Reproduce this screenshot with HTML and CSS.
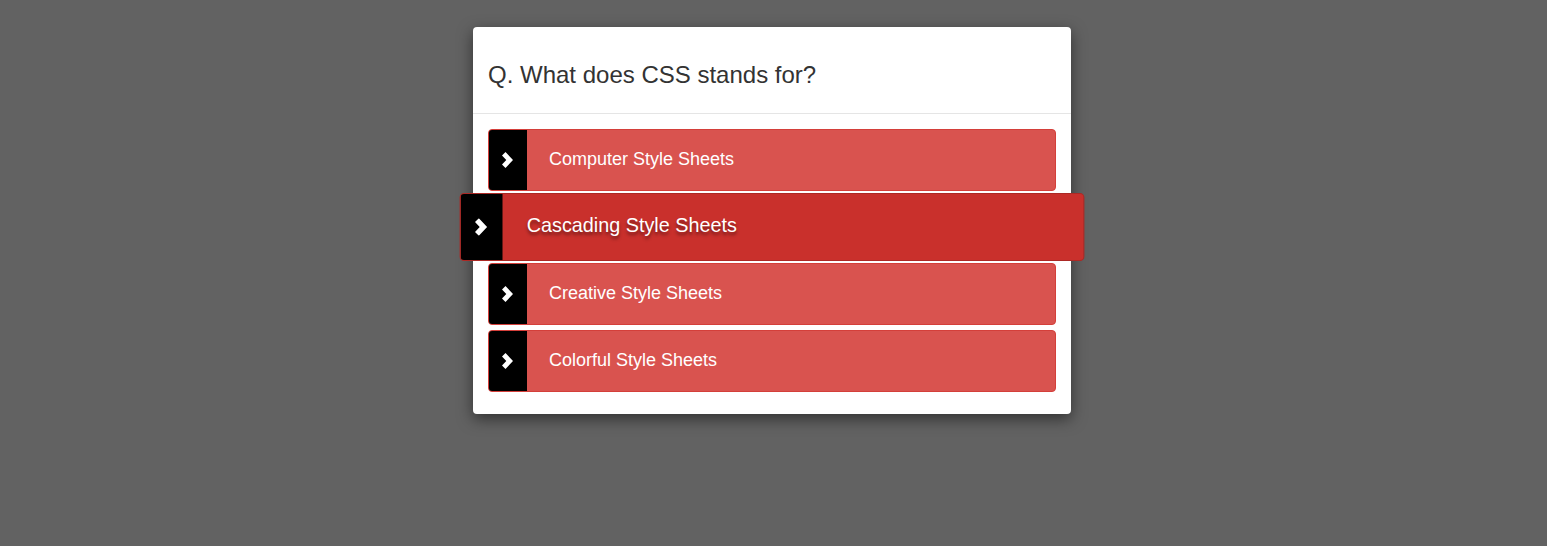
FILE: index.html
```html
<!DOCTYPE html>
<html>
<head>
<meta charset="utf-8">
<link rel="stylesheet" href="styles.css">
</head>
<body>
<div class="page">
  <div class="card">
    <div class="card-head">
      <h3 class="question">Q. What does CSS stands for?</h3>
    </div>
    <div class="card-body">
      <div class="answer">
        <span class="answer-icon"><svg width="11" height="16" viewBox="0 0 11 16"><polygon points="0,3.5 3.5,0 11,8 3.5,16 0,12.5 4.3,8" fill="#fff"/></svg></span>
        <span class="answer-label">Computer Style Sheets</span>
      </div>
      <div class="answer answer-active">
        <span class="answer-icon"><svg width="11" height="16" viewBox="0 0 11 16"><polygon points="0,3.5 3.5,0 11,8 3.5,16 0,12.5 4.3,8" fill="#fff"/></svg></span>
        <span class="answer-label">Cascading Style Sheets</span>
      </div>
      <div class="answer">
        <span class="answer-icon"><svg width="11" height="16" viewBox="0 0 11 16"><polygon points="0,3.5 3.5,0 11,8 3.5,16 0,12.5 4.3,8" fill="#fff"/></svg></span>
        <span class="answer-label">Creative Style Sheets</span>
      </div>
      <div class="answer">
        <span class="answer-icon"><svg width="11" height="16" viewBox="0 0 11 16"><polygon points="0,3.5 3.5,0 11,8 3.5,16 0,12.5 4.3,8" fill="#fff"/></svg></span>
        <span class="answer-label">Colorful Style Sheets</span>
      </div>
    </div>
  </div>
</div>
</body>
</html>
```

FILE: styles.css
```css
html, body {
  margin: 0;
  padding: 0;
  background: #626262;
  font-family: "Liberation Sans", Arial, sans-serif;
  height: 100%;
}

.page {
  padding: 27px 3px 0 0;
}

.card {
  width: 598px;
  margin: 0 auto;
  background: #fff;
  border-radius: 4px;
  box-shadow: 0 5px 15px rgba(0, 0, 0, 0.5);
}

.card-head {
  padding: 35px 15px 25px;
  border-bottom: 1px solid #e5e5e5;
}

.question {
  margin: 0;
  font-size: 24px;
  line-height: 26px;
  font-weight: normal;
  color: #333;
}

.card-body {
  padding: 15px 15px 17px;
}

.answer {
  display: flex;
  height: 60px;
  margin-bottom: 5px;
  background: #d9534f;
  border: 1px solid #d43f3a;
  border-radius: 4px;
  color: #fff;
  font-size: 18px;
  overflow: hidden;
}

.answer-icon {
  width: 38px;
  flex: none;
  background: #000;
  display: flex;
  align-items: center;
  justify-content: center;
  padding-right: 2px;
  box-sizing: border-box;
}

.answer-icon svg {
  display: block;
}

.answer-label {
  display: flex;
  align-items: center;
  padding-left: 22px;
  padding-bottom: 2px;
}

.answer-active {
  position: relative;
  z-index: 2;
  transform: scale(1.1);
  background: #c9302c;
  border-color: #ac2925;
}

.answer-active .answer-label {
  text-shadow: 0 2px 3px rgba(0, 0, 0, 0.45);
}
```
